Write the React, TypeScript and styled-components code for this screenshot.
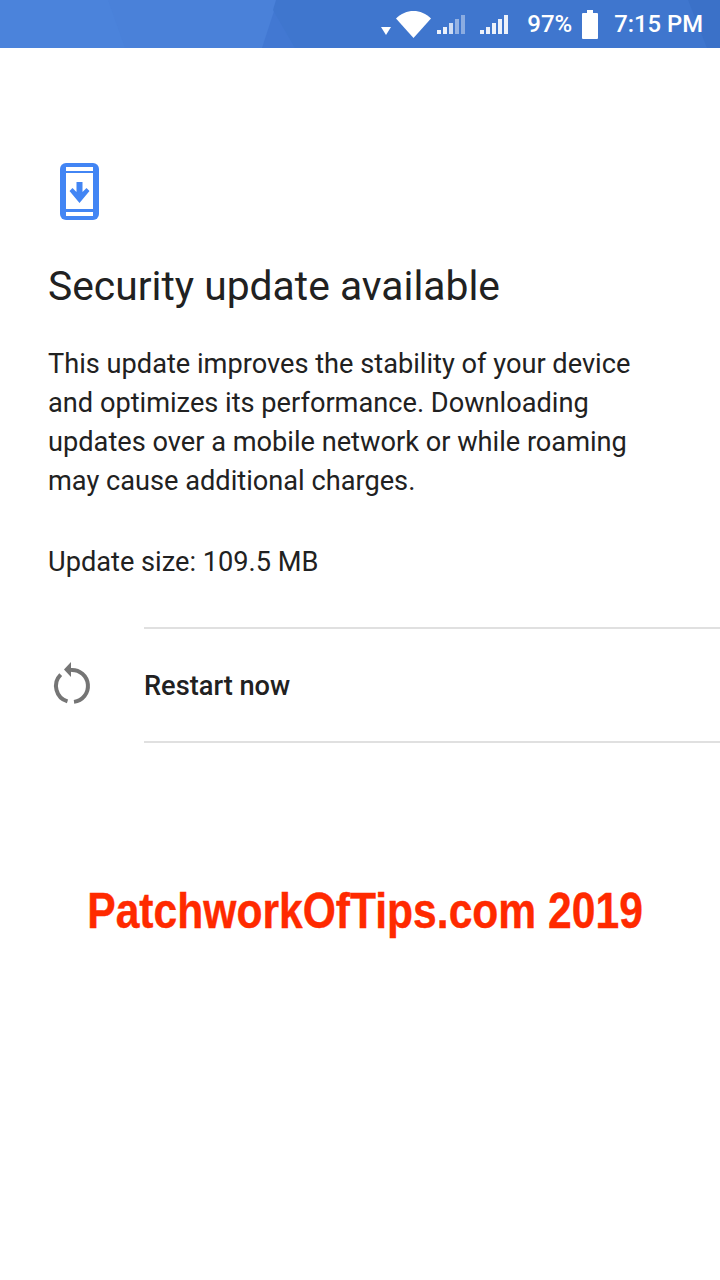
import React from "react";
import styled, { createGlobalStyle } from "styled-components";

const GlobalStyle = createGlobalStyle`
  html, body {
    margin: 0;
    padding: 0;
    background: #fff;
    font-family: Roboto, "Noto Sans", sans-serif;
  }
`;

const Signal = ({ faded }: { faded?: boolean }) => (
  <SignalBox $faded={faded}>
    <Bar $h={4} $o={0.9} />
    <Bar $h={7} $o={0.9} />
    <Bar $h={11} $o={faded ? 0.75 : 0.9} />
    <Bar $h={15} $o={faded ? 0.45 : 0.9} />
    <Bar $h={19} $o={faded ? 0.4 : 0.9} />
  </SignalBox>
);

export default function App() {
  return (
    <Page>
      <GlobalStyle />
      <StatusBar>
        <Shade $color="#4a81d9" $points="108px 0, 290px 0, 290px 48px, 125px 48px" />
        <Shade $color="#4278d2" $points="275px 8px, 300px 48px, 262px 48px" />
        <Shade $color="#3f76ce" $points="276px 0, 720px 0, 720px 48px, 295px 48px, 273px 10px" />
        <Shade $color="#3b71c8" $points="688px 0, 720px 0, 720px 48px, 707px 48px" />
        <DropMark viewBox="0 0 10 8">
          <path d="M0 0h10L5 8z" fill="#fff" />
        </DropMark>
        <WifiIcon viewBox="0 0 35 27">
          <path d="M0 7.5C5 2.5 11 0 17.5 0S30 2.5 35 7.5L17.5 27z" fill="#fff" />
        </WifiIcon>
        <Signal faded />
        <Signal />
        <Percent>97%</Percent>
        <BatteryIcon viewBox="0 0 16 29">
          <path d="M5 0h6v3h4a1 1 0 0 1 1 1v24a1 1 0 0 1-1 1H1a1 1 0 0 1-1-1V4a1 1 0 0 1 1-1h4z" fill="#fff" />
        </BatteryIcon>
        <Clock>7:15 PM</Clock>
      </StatusBar>

      <Content>
        <PhoneIcon viewBox="0 0 39 57">
          <rect width="39" height="57" rx="6" fill="#4285f4" />
          <rect x="6" y="4" width="27" height="4" fill="#fff" />
          <rect x="6" y="10" width="27" height="36" fill="#fff" />
          <rect x="6" y="49" width="27" height="4" fill="#fff" />
          <path d="M16.5 19h6v10l4-4 3 3-10 12-10-12 3-3 4 4z" fill="#4285f4" />
        </PhoneIcon>
        <Title>Security update available</Title>
        <Body>
          This update improves the stability of your device and optimizes its
          performance. Downloading updates over a mobile network or while
          roaming may cause additional charges.
        </Body>
        <Size>Update size: 109.5 MB</Size>
      </Content>

      <ActionRow>
        <ActionIcon viewBox="0 0 44 52">
          <path d="M10.7 15.7A16 16 0 0 0 17.5 42.35" fill="none" stroke="#757575" strokeWidth="4" />
          <path d="M21 11.03A16 16 0 0 1 24 42.87" fill="none" stroke="#757575" strokeWidth="4" />
          <path d="M21 3v15l-7-7.5z" fill="#757575" />
        </ActionIcon>
        <ActionLabel>Restart now</ActionLabel>
      </ActionRow>

      <Watermark>
        <span>PatchworkOfTips.com 2019</span>
      </Watermark>
    </Page>
  );
}

const Page = styled.div`
  width: 720px;
  height: 1280px;
  overflow: hidden;
  background: #fff;
  color: #212121;
`;

const StatusBar = styled.div`
  position: relative;
  display: flex;
  align-items: center;
  justify-content: flex-end;
  height: 48px;
  padding-right: 17px;
  box-sizing: border-box;
  background: #4b83db;
  color: #fff;
  overflow: hidden;
`;

const Shade = styled.div<{ $color: string; $points: string }>`
  position: absolute;
  inset: 0;
  background: ${(p) => p.$color};
  clip-path: polygon(${(p) => p.$points});
`;

const DropMark = styled.svg`
  position: relative;
  width: 10px;
  height: 8px;
  margin: 14px 5px 0 0;
`;

const WifiIcon = styled.svg`
  position: relative;
  width: 35px;
  height: 27px;
  margin-right: 6px;
`;

const SignalBox = styled.div<{ $faded?: boolean }>`
  position: relative;
  display: flex;
  align-items: flex-end;
  gap: 2px;
  height: 19px;
  margin-right: ${(p) => (p.$faded ? 15 : 19)}px;
`;

const Bar = styled.i<{ $h: number; $o: number }>`
  display: block;
  width: 4px;
  height: ${(p) => p.$h}px;
  background: #fff;
  opacity: ${(p) => p.$o};
`;

const Percent = styled.span`
  position: relative;
  font-size: 24px;
  font-weight: 500;
  margin-right: 10px;
`;

const BatteryIcon = styled.svg`
  position: relative;
  width: 16px;
  height: 29px;
  margin-right: 16px;
`;

const Clock = styled.span`
  position: relative;
  font-size: 23.8px;
  font-weight: 500;
`;

const Content = styled.div`
  display: flex;
  flex-direction: column;
  align-items: flex-start;
  padding: 115px 72px 0 48px;
`;

const PhoneIcon = styled.svg`
  width: 39px;
  height: 57px;
  margin-left: 12px;
`;

const Title = styled.h1`
  margin: 40px 0 0;
  font-size: 40.8px;
  line-height: 52px;
  font-weight: 400;
`;

const Body = styled.p`
  margin: 33px 0 0;
  font-size: 27.2px;
  line-height: 39px;
`;

const Size = styled.p`
  margin: 42px 0 0;
  font-size: 27.2px;
  line-height: 39px;
`;

const ActionRow = styled.div`
  display: flex;
  align-items: center;
  height: 112px;
  margin-top: 47px;
`;

const ActionIcon = styled.svg`
  width: 44px;
  height: 52px;
  margin-left: 50px;
`;

const ActionLabel = styled.div`
  flex: 1;
  height: 112px;
  margin-left: 50px;
  border-top: 2px solid #e0e0e0;
  border-bottom: 2px solid #e0e0e0;
  font-size: 27.2px;
  font-weight: 500;
  line-height: 114px;
`;

const Watermark = styled.div`
  margin-top: 140px;
  padding-left: 10px;
  text-align: center;
  color: #ff2a00;
  font-family: "Liberation Sans", Arial, sans-serif;
  font-weight: 700;
  font-size: 50px;
  line-height: 60px;
  -webkit-text-stroke: 0.4px #ff2a00;
  span {
    display: inline-block;
    transform: scaleX(0.852);
    white-space: nowrap;
  }
`;
